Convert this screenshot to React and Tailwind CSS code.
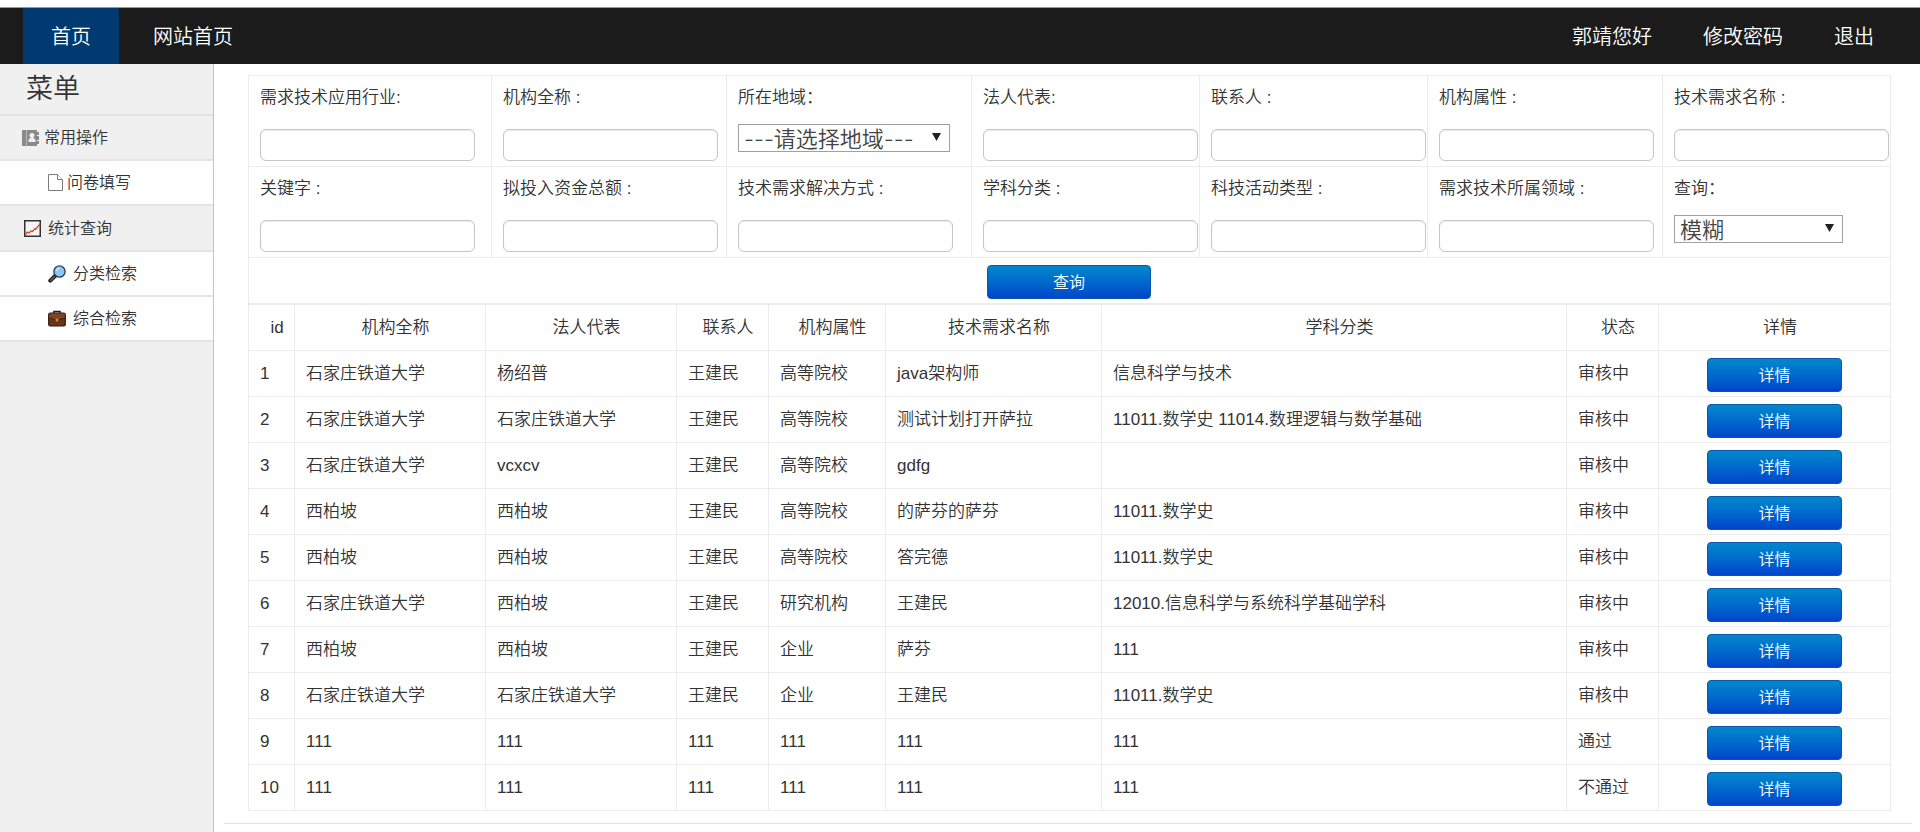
import { useState } from 'react';

const fields = [
  { id: 'industry', label: '需求技术应用行业:' },
  { id: 'orgName', label: '机构全称 :' },
  { id: 'region', label: '所在地域：', options: ['---请选择地域---'], width: 'w-[212px]' },
  { id: 'legalPerson', label: '法人代表:' },
  { id: 'contact', label: '联系人 :' },
  { id: 'orgType', label: '机构属性 :' },
  { id: 'demandName', label: '技术需求名称 :' },
  { id: 'keyword', label: '关键字 :' },
  { id: 'funds', label: '拟投入资金总额 :' },
  { id: 'solution', label: '技术需求解决方式 :' },
  { id: 'subject', label: '学科分类 :' },
  { id: 'activity', label: '科技活动类型 :' },
  { id: 'domain', label: '需求技术所属领域 :' },
  { id: 'mode', label: '查询：', options: ['模糊', '精确'], width: 'w-[169px]' },
];

const columns = [
  { title: 'id', width: 'w-[46px]' },
  { title: '机构全称', width: 'w-[191px]' },
  { title: '法人代表', width: 'w-[191px]' },
  { title: '联系人', width: 'w-[92px]' },
  { title: '机构属性', width: 'w-[117px]' },
  { title: '技术需求名称', width: 'w-[216px]' },
  { title: '学科分类', width: 'w-[465px]' },
  { title: '状态', width: 'w-[92px]' },
  { title: '详情', width: 'w-[232px]' },
];

const rows = [
  [1, '石家庄铁道大学', '杨绍普', '王建民', '高等院校', 'java架构师', '信息科学与技术', '审核中'],
  [2, '石家庄铁道大学', '石家庄铁道大学', '王建民', '高等院校', '测试计划打开萨拉', '11011.数学史 11014.数理逻辑与数学基础', '审核中'],
  [3, '石家庄铁道大学', 'vcxcv', '王建民', '高等院校', 'gdfg', '', '审核中'],
  [4, '西柏坡', '西柏坡', '王建民', '高等院校', '的萨芬的萨芬', '11011.数学史', '审核中'],
  [5, '西柏坡', '西柏坡', '王建民', '高等院校', '答完德', '11011.数学史', '审核中'],
  [6, '石家庄铁道大学', '西柏坡', '王建民', '研究机构', '王建民', '12010.信息科学与系统科学基础学科', '审核中'],
  [7, '西柏坡', '西柏坡', '王建民', '企业', '萨芬', '111', '审核中'],
  [8, '石家庄铁道大学', '石家庄铁道大学', '王建民', '企业', '王建民', '11011.数学史', '审核中'],
  [9, '111', '111', '111', '111', '111', '111', '通过'],
  [10, '111', '111', '111', '111', '111', '111', '不通过'],
];

function ContactsIcon() {
  return (
    <svg width="17" height="16" viewBox="0 0 17 16" fill="#8a8a8a">
      <path d="M0 0h4v16H0z" />
      <path
        fillRule="evenodd"
        d="M5 0h10v2h2v3h-2v1h2v4h-2v1h2v3h-2v2H5zM10 3a2.300 2.300 0 0 0-1.500 4.200c.2.500.1.900-.4 1.200-1.100.4-1.600.9-1.600 2V12h7v-1.600c0-1.100-.5-1.600-1.600-2-.5-.3-.6-.7-.4-1.200A2.300 2.300 0 0 0 10 3z"
      />
      <path d="M4 0h1v16H4z" fill="#b5b5b5" />
    </svg>
  );
}

function FileIcon() {
  return (
    <svg width="15" height="17" viewBox="0 0 15 17" fill="#fff" stroke="#7c7c7c">
      <path d="M.5.5h9l5 5v11H.5z" />
      <path d="M9.500.5v5h5" />
    </svg>
  );
}

function ChartIcon() {
  return (
    <svg width="17" height="17" viewBox="0 0 17 17" fill="none">
      <path d="M.75.75h15.500v15.500H.75z" fill="#f4f4f4" stroke="#333" strokeWidth="1.500" />
      <path d="M1.500 14.500l2-2.500 1.500 1 2-2 1.500.5 2-2.500 1 .5 4.500-5.500" stroke="#d8432f" strokeWidth="1.300" />
    </svg>
  );
}

function SearchIcon() {
  return (
    <svg width="18" height="18" viewBox="0 0 18 18">
      <path d="M7.500 10.500L2.300 15.700" stroke="#222" strokeWidth="4" strokeLinecap="round" />
      <path d="M6.300 11.700l-3.500 3.500" stroke="#666" strokeWidth="1.500" strokeLinecap="round" />
      <circle cx="11.500" cy="6.500" r="5.600" fill="#8ec5f4" stroke="#28435c" strokeWidth="1.400" />
      <path d="M8.500 6a3.200 3.200 0 0 1 3-2.700" fill="none" stroke="#d6ecff" strokeWidth="1.200" />
    </svg>
  );
}

function BriefcaseIcon() {
  return (
    <svg width="18" height="17" viewBox="0 0 18 17">
      <path d="M6 3.500V1.500h6v2" fill="none" stroke="#2b1a12" strokeWidth="1.600" />
      <rect x=".7" y="3" width="16.600" height="13" rx="1.500" fill="#6b3519" stroke="#2b1a12" strokeWidth="1.200" />
      <path d="M1.300 3.600h15.400v4.400L9 10.500 1.300 8z" fill="#804323" />
      <path d="M1.300 8L9 10.500 16.700 8" fill="none" stroke="#40200f" />
      <rect x="7.700" y="8.700" width="2.600" height="2.600" fill="#d98a2b" />
    </svg>
  );
}

function MenuGroup({ icon, title, className }) {
  return (
    <div className={`flex items-center border-b-2 border-[#e4e4e4] ${className}`}>
      {icon}
      <span>{title}</span>
    </div>
  );
}

function MenuItem({ icon, title, className }) {
  return (
    <a href="#" className={`flex h-[45px] items-center border-b-2 border-[#e4e4e4] bg-white pl-12 ${className}`}>
      {icon}
      <span>{title}</span>
    </a>
  );
}

function BlueButton({ children, className, type = 'button' }) {
  return (
    <button
      type={type}
      className={`h-[34px] rounded border border-[#0a58a8] bg-linear-to-b from-[#0088cc] to-[#0044cc] pt-[2px] text-base text-white ${className}`}
    >
      {children}
    </button>
  );
}

function Field({ field }) {
  const [value, setValue] = useState(field.options ? field.options[0] : '');

  return (
    <div className="h-[91px] border-r border-b border-[#ececec] pt-2 pl-[11px]">
      <label htmlFor={field.id} className="block h-7 leading-7">{field.label}</label>
      {field.options ? (
        <div className={`relative mt-3 ${field.width}`}>
          <select
            id={field.id}
            value={value}
            onChange={(e) => setValue(e.target.value)}
            className="block h-7 w-full appearance-none border border-[#a0a0a0] bg-white pl-[5px] font-['Inter','Noto_Sans_CJK_SC',sans-serif] text-[22px] leading-7 text-[#444]"
          >
            {field.options.map((o) => (
              <option key={o}>{o}</option>
            ))}
          </select>
          <svg className="pointer-events-none absolute top-[9px] right-[9px]" width="9" height="8" viewBox="0 0 9 8">
            <path d="M0 0h9L4.500 8z" fill="#222" />
          </svg>
        </div>
      ) : (
        <input
          id={field.id}
          type="text"
          value={value}
          onChange={(e) => setValue(e.target.value)}
          className="mt-[17px] block h-8 w-[215px] rounded-md border border-[#c6c6c6] bg-white px-2 shadow-[inset_0_1px_1px_rgba(0,0,0,0.08)]"
        />
      )}
    </div>
  );
}

export default function App() {
  return (
    <div className="flex min-h-screen flex-col bg-white pt-[7px] font-['Liberation_Sans','Noto_Sans_CJK_SC',sans-serif] font-[350] text-[#333]">
      <nav className="flex h-[57px] items-stretch justify-between border-t border-[#999] bg-[#1b1b1b] pr-[46px] pl-[23px] text-xl text-white">
        <div className="flex gap-[6px]">
          <a href="#" className="flex items-center bg-[#003a70] px-7 pt-[2px]">首页</a>
          <a href="#" className="flex items-center px-7 pt-[2px]">网站首页</a>
        </div>
        <div className="flex items-center gap-[51px] pt-[2px]">
          <a href="#">郭靖您好</a>
          <a href="#">修改密码</a>
          <a href="#">退出</a>
        </div>
      </nav>

      <div className="flex flex-1">
        <aside className="w-[214px] shrink-0 border-r border-[#c4c4c4] bg-[#f0f0f0] text-base">
          <h1 className="flex h-[52px] items-center border-b-2 border-[#e4e4e4] pl-[26px] text-[27px]">菜单</h1>
          <MenuGroup icon={<ContactsIcon />} title="常用操作" className="h-[45px] gap-[5px] pl-[22px]" />
          <MenuItem icon={<FileIcon />} title="问卷填写" className="gap-1" />
          <MenuGroup icon={<ChartIcon />} title="统计查询" className="h-[46px] gap-[7px] pt-px pl-6" />
          <MenuItem icon={<SearchIcon />} title="分类检索" className="gap-[7px]" />
          <MenuItem icon={<BriefcaseIcon />} title="综合检索" className="gap-[7px]" />
        </aside>

        <main className="min-w-0 flex-1 pt-[11px] pr-2 pl-[10px] text-[17px]">
          <div className="mr-[21px] ml-6">
            {/* 查询条件 */}
            <form className="border-t border-l border-[#ececec]" onSubmit={(e) => e.preventDefault()}>
              <div className="grid grid-cols-[243fr_235fr_245fr_228fr_228fr_235fr_228fr]">
                {fields.map((f) => (
                  <Field key={f.id} field={f} />
                ))}
              </div>
              <div className="flex h-[46px] items-center justify-center border-r border-b border-[#ececec] pt-[2px] pr-px">
                <BlueButton type="submit" className="w-[164px]">查询</BlueButton>
              </div>
            </form>

            {/* 查询结果 */}
            <table className="w-full table-fixed border-collapse border border-[#ececec]">
              <thead>
                <tr>
                  {columns.map((c) => (
                    <th key={c.title} className={`h-[46px] border border-[#ececec] pl-[11px] text-center font-[350] ${c.width}`}>
                      {c.title}
                    </th>
                  ))}
                </tr>
              </thead>
              <tbody>
                {rows.map((row) => (
                  <tr key={row[0]}>
                    {row.map((cell, i) => (
                      <td key={i} className="h-[46px] border border-[#ececec] pl-[11px]">{cell}</td>
                    ))}
                    <td className="h-[46px] border border-[#ececec] pt-[2px] text-center">
                      <BlueButton className="mx-auto block w-[135px]">详情</BlueButton>
                    </td>
                  </tr>
                ))}
              </tbody>
            </table>
          </div>
          <hr className="mt-3 border-[#e2e2e2]" />
        </main>
      </div>
    </div>
  );
}
